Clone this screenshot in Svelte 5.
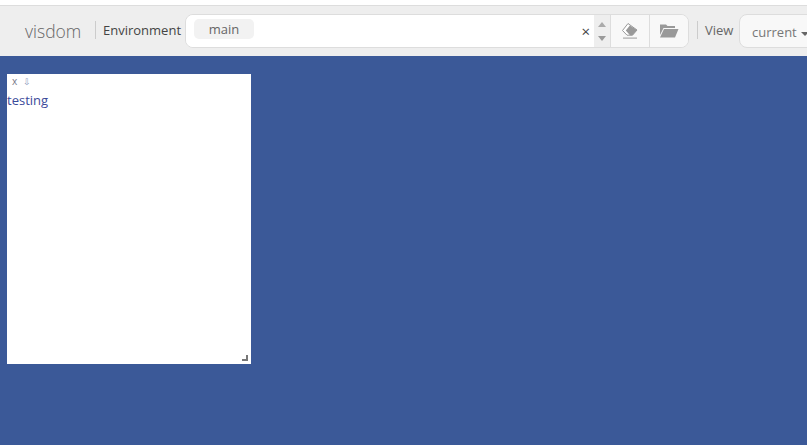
<script>
  let envs = ['main'];
</script>

<div class="page">
  <nav class="navbar">
    <span class="brand">visdom</span>
    <span class="divider"></span>
    <span class="label">Environment</span>
    <div class="env-group">
      <div class="env-select">
        {#each envs as env}
          <span class="tag">{env}</span>
        {/each}
        <span class="clear">×</span>
        <span class="spin">
          <span class="up"></span>
          <span class="down"></span>
        </span>
      </div>
      <button class="btn" aria-label="Clear">
        <svg width="18" height="18" viewBox="0 0 18 18">
          <path d="M7 1.5 L16 8 L11.5 13.2 L6 13.2 L1.5 8.5 Z" fill="#fff" stroke="#999" stroke-width="1"/>
          <path d="M8.8 3.5 L16 8 L11.5 13.2 L9 13.2 L4.8 8.6 Z" fill="#999"/>
          <rect x="2" y="15.5" width="14" height="1.2" fill="#aaa"/>
        </svg>
      </button>
      <button class="btn last" aria-label="Open">
        <svg width="20" height="16" viewBox="0 0 20 16">
          <path d="M1 3 V1.5 H7 L8.5 3 H16 V5 H4.5 L1 12 Z" fill="#999"/>
          <path d="M5 6 H19.5 L16 14.5 H1 Z" fill="#999"/>
        </svg>
      </button>
    </div>
    <span class="divider second"></span>
    <span class="label view">View</span>
    <div class="view-select">current<span class="caret"></span></div>
  </nav>
  <main class="grid">
    <section class="pane">
      <div class="pane-bar">
        <span class="ctl">x</span>
        <span class="ctl arrow">⇩</span>
      </div>
      <div class="content">testing</div>
      <span class="handle"></span>
    </section>
  </main>
</div>

<style>
  :global(body) {
    margin: 0;
    overflow: hidden;
  }
  .page {
    height: 445px;
    display: flex;
    flex-direction: column;
    font-family: "Open Sans", "Liberation Sans", sans-serif;
    background: #fff;
    padding-top: 5px;
    box-sizing: border-box;
  }
  .navbar {
    height: 51px;
    box-sizing: border-box;
    flex: none;
    display: flex;
    align-items: center;
    background: #eee;
    border-top: 1px solid #ddd;
    padding-left: 25px;
    white-space: nowrap;
    overflow: hidden;
  }
  .navbar > * {
    flex: none;
  }
  .brand {
    font-size: 17.5px;
    font-weight: 300;
    color: #666;
    width: 70px;
  }
  .divider {
    width: 1px;
    height: 18px;
    background: #ccc;
    margin-right: 7px;
    margin-top: -3px;
  }
  .divider.second {
    margin-left: 8px;
    margin-right: 7px;
  }
  .label {
    font-size: 13px;
    color: #444;
    width: 82px;
    margin-top: -2px;
  }
  .label.view {
    width: 34px;
    color: #666;
  }
  .env-group {
    display: flex;
    height: 34px;
    width: 504px;
    box-sizing: border-box;
    border: 1px solid #ddd;
    border-radius: 8px;
    overflow: hidden;
    background: #f8f8f8;
  }
  .env-select {
    flex: 1;
    display: flex;
    align-items: center;
    background: #fff;
    padding-left: 8px;
  }
  .tag {
    width: 60px;
    height: 20px;
    line-height: 21px;
    text-align: center;
    font-size: 13px;
    color: #666;
    background: #f2f2f2;
    border-radius: 5px;
    margin-top: -4px;
  }
  .clear {
    margin-left: auto;
    font-size: 15px;
    line-height: 1;
    color: #444;
    margin-right: 4px;
  }
  .spin {
    width: 16px;
    align-self: stretch;
    background: #eee;
    display: flex;
    flex-direction: column;
    align-items: center;
    justify-content: center;
    gap: 9px;
  }
  .up,
  .down {
    width: 0;
    height: 0;
    border-left: 4px solid transparent;
    border-right: 4px solid transparent;
  }
  .up {
    border-bottom: 5px solid #aaa;
  }
  .down {
    border-top: 5px solid #999;
  }
  .btn {
    width: 39px;
    padding: 0;
    display: flex;
    align-items: center;
    justify-content: center;
    background: #f8f8f8;
    border: 0;
    border-left: 1px solid #ddd;
  }
  .view-select {
    height: 34px;
    width: 90px;
    box-sizing: border-box;
    border: 1px solid #ddd;
    border-radius: 8px;
    background: #f8f8f8;
    color: #777;
    font-size: 13px;
    line-height: 34px;
    padding-left: 12px;
  }
  .caret {
    display: inline-block;
    margin-left: 4px;
    vertical-align: middle;
    border-left: 4px solid transparent;
    border-right: 4px solid transparent;
    border-top: 4px solid #666;
  }
  .grid {
    flex: 1;
    background: #3b5998;
    padding: 18px 7px;
  }
  .pane {
    position: relative;
    width: 244px;
    height: 290px;
    background: #fff;
  }
  .pane-bar {
    height: 14px;
    display: flex;
    align-items: center;
    padding-left: 5px;
    gap: 6px;
    font-size: 10px;
    color: #778;
  }
  .ctl.arrow {
    font-size: 9px;
    color: #8898bb;
  }
  .content {
    font-size: 13px;
    line-height: 25px;
    color: #3b4a9a;
  }
  .handle {
    position: absolute;
    right: 3px;
    bottom: 3px;
    width: 6px;
    height: 6px;
    box-sizing: border-box;
    border-right: 2px solid #777;
    border-bottom: 2px solid #777;
  }
</style>
